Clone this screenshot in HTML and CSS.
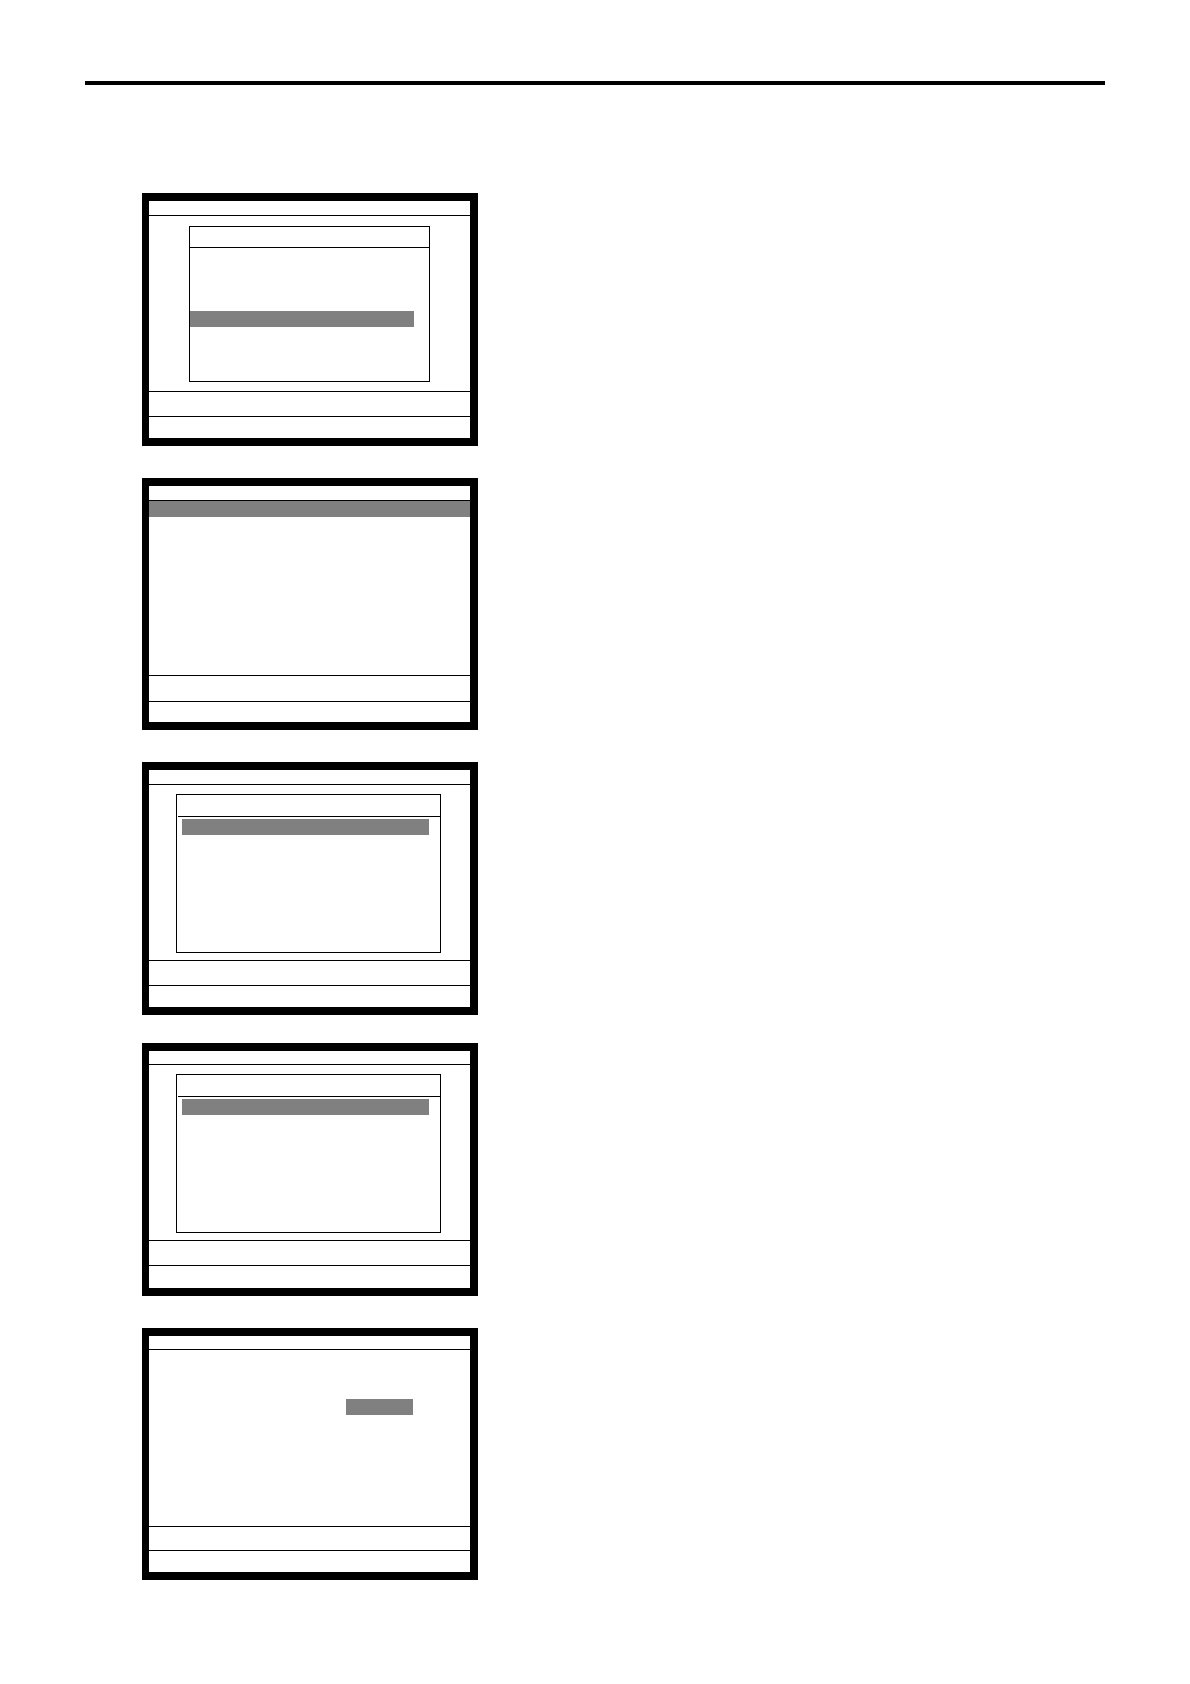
FILE: index.html
```html
<!DOCTYPE html>
<html lang="en">
<head>
<meta charset="utf-8">
<meta name="viewport" content="width=device-width, initial-scale=1">
<title>Screens</title>
<link rel="stylesheet" href="styles.css">
</head>
<body>
<main class="page">
  <hr class="rule">
  <div class="screens">
    <section class="screen">
      <header class="title"></header>
      <div class="body body-menu">
        <div class="dialog">
          <div class="dialog-title"></div>
          <div class="highlight menu-item"></div>
        </div>
      </div>
      <div class="message"></div>
      <footer class="status"></footer>
    </section>

    <section class="screen screen-list">
      <header class="title"></header>
      <div class="body">
        <div class="highlight"></div>
      </div>
      <div class="message"></div>
      <footer class="status"></footer>
    </section>

    <section class="screen">
      <header class="title"></header>
      <div class="body body-options">
        <div class="dialog">
          <div class="dialog-title"></div>
          <div class="highlight option-item"></div>
        </div>
      </div>
      <div class="message"></div>
      <footer class="status"></footer>
    </section>

    <section class="screen screen-slim screen-followup">
      <header class="title"></header>
      <div class="body body-options">
        <div class="dialog">
          <div class="dialog-title"></div>
          <div class="highlight option-item"></div>
        </div>
      </div>
      <div class="message"></div>
      <footer class="status"></footer>
    </section>

    <section class="screen screen-slim screen-form">
      <header class="title"></header>
      <div class="body body-form">
        <div class="highlight"></div>
      </div>
      <div class="message"></div>
      <footer class="status"></footer>
    </section>
  </div>
</main>
</body>
</html>
```

FILE: styles.css
```css
*,
*::before,
*::after {
  box-sizing: border-box;
}

body {
  margin: 0;
  background: #fff;
  font-family: "Liberation Sans", Arial, sans-serif;
}

.page {
  padding: 81px 85px;
}

.rule {
  height: 4px;
  margin: 0;
  border: 0;
  background: #000;
}

.screens {
  display: flex;
  flex-direction: column;
  max-width: 393px;
  margin-top: 108px;
  padding-left: 57px;
}

/* Device screen: title bar, work area, message line, status line */
.screen {
  --title: 15px;
  --work: 175px;
  --message: 25px;
  display: grid;
  grid-template-rows: var(--title) minmax(var(--work), auto) var(--message) 1fr;
  min-height: 253px;
  border: 8px solid #000;
  border-left-width: 7px;
}

.screen + .screen {
  margin-top: 32px;
}

.screen + .screen-followup {
  margin-top: 28px;
}

.screen-list {
  --work: 174px;
  --message: 26px;
  min-height: 252px;
}

.screen-slim {
  --title: 14px;
}

.screen-form {
  --work: 176px;
  --message: 24px;
  min-height: 252px;
}

.title {
  border-bottom: 1px solid #000;
}

.message,
.status {
  border-top: 1px solid #000;
}

.body {
  display: grid;
  align-content: start;
}

.body-menu {
  align-content: stretch;
  padding: 10px 40px 9px;
}

.body-options {
  align-content: stretch;
  padding: 9px 29px 7px 27px;
}

.body-form {
  padding: 49px 57px 0 197px;
}

.dialog {
  border: 1px solid #000;
}

.dialog-title {
  height: 21px;
  border-bottom: 1px solid #000;
}

.body-options .dialog-title {
  height: 22px;
  margin-left: 1px;
}

.highlight {
  height: 16px;
  background: #808080;
}

.menu-item {
  margin: 63px 15px 0 0;
}

.option-item {
  margin: 2px 11px 0 5px;
}
```
